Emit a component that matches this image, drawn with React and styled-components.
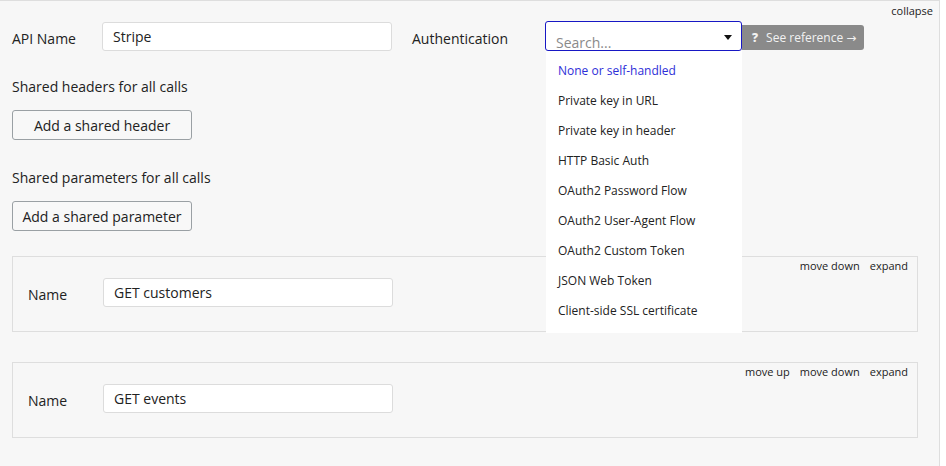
import React from 'react';
import styled, { createGlobalStyle } from 'styled-components';

const GlobalStyle = createGlobalStyle`
  html, body {
    margin: 0;
    padding: 0;
    background: #ffffff;
    font-family: "Open Sans", "DejaVu Sans", sans-serif;
    color: #222;
  }
  * { box-sizing: border-box; }
`;

const Panel = styled.div`
  width: 940px;
  height: 466px;
  background: #f7f7f7;
  border-top: 1px solid #dedede;
  border-right: 1px solid #dedede;
  padding: 0 21px 0 12px;
  display: flex;
  flex-direction: column;
`;

const TopBar = styled.div`
  display: flex;
  justify-content: flex-end;
  height: 20px;
  padding-top: 3px;
  margin-right: -15px;
`;

const SmallLink = styled.span`
  font-size: 11px;
  line-height: 14px;
  color: #222;
  cursor: pointer;
`;

const Row = styled.div`
  display: flex;
  align-items: center;
`;

// labels sit a touch below the centre of their input
const Label = styled.span`
  width: ${({ w }) => w}px;
  flex-shrink: 0;
  margin-top: 4px;
  font-size: 14px;
  line-height: 19px;
  color: #222;
`;

const TextInput = styled.div`
  width: 290px;
  height: 29px;
  background: #fff;
  border: 1px solid #dcdcdc;
  border-radius: 3px;
  padding: 0 10px;
  font-size: 14px;
  line-height: 27px;
  color: #222;
`;

const Spacer = styled.div`
  width: 20px;
`;

const DropWrap = styled.div`
  position: relative;
  display: flex;
  align-items: center;
`;

const Search = styled.div`
  position: relative;
  width: 197px;
  height: 30px;
  background: #fff;
  border: 1px solid #1717c4;
  border-radius: 3px;
  padding: 11px 10px 0;
  font-size: 14px;
  line-height: 20px;
  color: #8a8a8a;
  overflow: hidden;
`;

const Caret = styled.span`
  position: absolute;
  right: 9px;
  top: 13px;
  width: 0;
  height: 0;
  border-left: 4px solid transparent;
  border-right: 4px solid transparent;
  border-top: 5px solid #111;
`;

const RefButton = styled.div`
  display: flex;
  align-items: center;
  gap: 8px;
  height: 25px;
  width: 122px;
  margin-top: 3px;
  padding: 0 10px;
  background: #8a8a8a;
  border-radius: 0 3px 3px 0;
  color: #f2f2f2;
  font-size: 12px;
  white-space: nowrap;

  b {
    font-weight: 800;
    font-size: 12px;
  }
`;

const Menu = styled.ul`
  position: absolute;
  top: 30px;
  left: 1px;
  width: 196px;
  margin: 0;
  padding: 5px 0 7px;
  list-style: none;
  background: #fff;
  z-index: 5;
`;

const MenuItem = styled.li`
  height: 30px;
  line-height: 30px;
  padding-left: 12px;
  font-size: 12px;
  color: ${({ active }) => (active ? '#2e2ed8' : '#222')};
  cursor: pointer;
`;

const SectionTitle = styled.div`
  font-size: 14px;
  line-height: 19px;
  margin-top: ${({ top }) => top}px;
  color: #222;
`;

const OutlineButton = styled.button`
  margin-top: 14px;
  width: 180px;
  height: 30px;
  background: #f8f8f8;
  border: 1px solid #9aa0a4;
  border-radius: 3px;
  font-family: inherit;
  font-size: 14px;
  color: #222;
  padding: 0;
  align-self: flex-start;
`;

const Card = styled.div`
  margin-top: ${({ top }) => top}px;
  height: 76px;
  border: 1px solid #dedede;
  padding: 2px 9px 0 15px;
  display: flex;
  flex-direction: column;
`;

const CardActions = styled.div`
  display: flex;
  justify-content: flex-end;
  gap: 10px;
  height: 19px;
`;

const authOptions = [
  'None or self-handled',
  'Private key in URL',
  'Private key in header',
  'HTTP Basic Auth',
  'OAuth2 Password Flow',
  'OAuth2 User-Agent Flow',
  'OAuth2 Custom Token',
  'JSON Web Token',
  'Client-side SSL certificate',
];

function CallCard({ top, name, actions }) {
  return (
    <Card top={top}>
      <CardActions>
        {actions.map((a) => (
          <SmallLink key={a}>{a}</SmallLink>
        ))}
      </CardActions>
      <Row>
        <Label w={75}>Name</Label>
        <TextInput>{name}</TextInput>
      </Row>
    </Card>
  );
}

export default function App() {
  return (
    <>
      <GlobalStyle />
      <Panel>
        <TopBar>
          <SmallLink>collapse</SmallLink>
        </TopBar>
        <Row>
          <Label w={90}>API Name</Label>
          <TextInput>Stripe</TextInput>
          <Spacer />
          <Label w={133}>Authentication</Label>
          <DropWrap>
            <Search>
              Search...
              <Caret />
            </Search>
            <RefButton>
              <b>?</b>
              <span>See reference →</span>
            </RefButton>
            <Menu>
              {authOptions.map((o, i) => (
                <MenuItem key={o} active={i === 0}>{o}</MenuItem>
              ))}
            </Menu>
          </DropWrap>
        </Row>
        <SectionTitle top={26}>Shared headers for all calls</SectionTitle>
        <OutlineButton>Add a shared header</OutlineButton>
        <SectionTitle top={28}>Shared parameters for all calls</SectionTitle>
        <OutlineButton>Add a shared parameter</OutlineButton>
        <CallCard top={25} name="GET customers" actions={['move down', 'expand']} />
        <CallCard top={30} name="GET events" actions={['move up', 'move down', 'expand']} />
      </Panel>
    </>
  );
}
